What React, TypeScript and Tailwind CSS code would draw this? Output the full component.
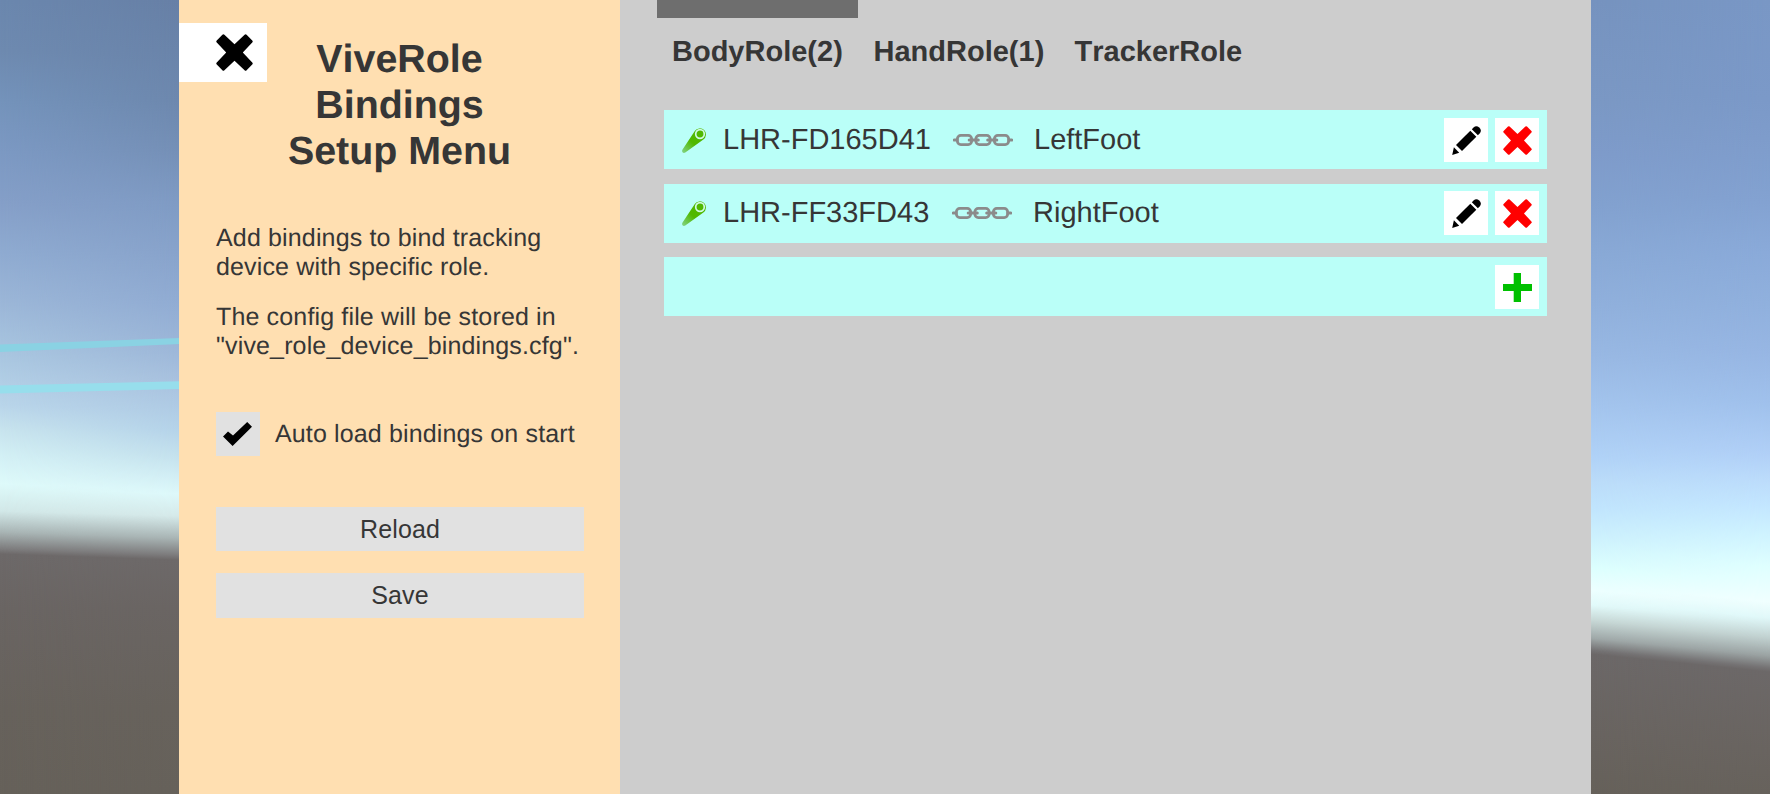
import type { ReactNode } from "react";

type Stop = [number, string];

const GROUND: Stop[] = [
  [608, "#6a6563"],
  [709, "#67625c"],
  [794, "#66615a"],
];

const WEST_OUTER: Stop[] = [
  [0, "#6b87ae"], [51, "#6e8ab0"], [101, "#7493bb"], [152, "#7c99c3"], [203, "#859fc8"],
  [253, "#8fabd1"], [304, "#9cb7d8"], [354, "#a9c6e0"], [405, "#b9d5ea"], [430, "#c8e4ee"],
  [456, "#d3f0f5"], [484, "#defafa"], [511, "#d2e8e8"], [532, "#a9b5b5"], [549, "#7d7c7d"],
  [554, "#6d6969"], ...GROUND,
];
const WEST_INNER: Stop[] = [
  [0, "#6780a6"], [101, "#6d88ae"], [152, "#7590b7"], [203, "#7f9bc4"], [253, "#88a3cb"],
  [304, "#91acd3"], [354, "#9eb8d9"], [380, "#a8c1de"], [430, "#b5d3e9"], [456, "#c4e1ed"],
  [494, "#ddf8fa"], [516, "#d5e9e9"], [538, "#a9b5b5"], [555, "#7d7c7d"], [560, "#6d6969"], ...GROUND,
];
const EAST_INNER: Stop[] = [
  [0, "#7693bf"], [101, "#7b98c4"], [152, "#7e9bca"], [203, "#82a1cf"], [253, "#89a9d6"],
  [304, "#90b0dc"], [354, "#98b8e3"], [405, "#a3c4ed"], [456, "#b0d2f7"], [481, "#bbdcf9"],
  [506, "#c0e4fd"], [537, "#cdf1fd"], [567, "#dcfffe"], [590, "#edffff"], [605, "#e2fafa"],
  [620, "#c8d9d7"], [638, "#a0a9a9"], [650, "#757374"], [654, "#6c6868"], [734, "#696460"], [794, "#66615a"],
];
const EAST_OUTER: Stop[] = [
  [0, "#7997c5"], [101, "#7b99c8"], [152, "#7f9dcc"], [203, "#83a2d1"], [253, "#8aaad9"],
  [304, "#90b0dd"], [354, "#97b6e3"], [405, "#a0c1ec"], [456, "#b1d0f7"], [481, "#bcdcfb"],
  [506, "#c3e6ff"], [537, "#d0f4ff"], [567, "#dfffff"], [602, "#f0ffff"], [618, "#e0f8f9"],
  [638, "#c0d0cf"], [656, "#9aa2a2"], [668, "#757374"], [672, "#6c6868"], [750, "#696460"], [794, "#67625c"],
];

function SkyGradient({ id, stops, x, tilt }: { id: string; stops: Stop[]; x: number; tilt: number }) {
  return (
    <linearGradient id={id} gradientUnits="userSpaceOnUse" x1={0} y1={0} x2={0} y2={794} gradientTransform={`translate(${x} 0) skewY(${tilt})`}>
      {stops.map(([y, color]) => (
        <stop key={y} offset={y / 794} stopColor={color} />
      ))}
    </linearGradient>
  );
}

function Skybox() {
  return (
    <svg className="absolute inset-0 -z-10" width={1770} height={794} viewBox="0 0 1770 794" aria-hidden="true">
      <defs>
        <SkyGradient id="westOuter" stops={WEST_OUTER} x={0} tilt={1.9} />
        <SkyGradient id="westInner" stops={WEST_INNER} x={179} tilt={1.9} />
        <SkyGradient id="eastInner" stops={EAST_INNER} x={1591} tilt={5.7} />
        <SkyGradient id="eastOuter" stops={EAST_OUTER} x={1770} tilt={5.7} />
        <linearGradient id="fadeWest" gradientUnits="userSpaceOnUse" x1={0} x2={179} y1={0} y2={0}>
          <stop offset={0} stopColor="#fff" stopOpacity={0} />
          <stop offset={1} stopColor="#fff" />
        </linearGradient>
        <linearGradient id="fadeEast" gradientUnits="userSpaceOnUse" x1={1591} x2={1770} y1={0} y2={0}>
          <stop offset={0} stopColor="#fff" stopOpacity={0} />
          <stop offset={1} stopColor="#fff" />
        </linearGradient>
        <mask id="maskWest" maskUnits="userSpaceOnUse" x={0} y={0} width={180} height={794}>
          <rect width={180} height={794} fill="url(#fadeWest)" />
        </mask>
        <mask id="maskEast" maskUnits="userSpaceOnUse" x={1590} y={0} width={180} height={794}>
          <rect x={1590} width={180} height={794} fill="url(#fadeEast)" />
        </mask>
      </defs>
      <rect width={180} height={794} fill="url(#westOuter)" />
      <rect width={180} height={794} fill="url(#westInner)" mask="url(#maskWest)" />
      <rect x={1590} width={180} height={794} fill="url(#eastInner)" />
      <rect x={1590} width={180} height={794} fill="url(#eastOuter)" mask="url(#maskEast)" />
      <path d="M0 344.5L180 338V344L0 352Z" fill="#8ad2e3" />
      <path d="M0 385.5L180 381.2V389L0 393.5Z" fill="#97deec" />
    </svg>
  );
}

function CrossIcon({ className }: { className: string }) {
  return (
    <svg className={className} viewBox="0 0 29 29" fill="currentColor" aria-hidden="true">
      <path d="M5 0.6Q5.8 -0.2 6.6 0.6L14.5 8L22.4 0.6Q23.2 -0.2 24 0.6L28.4 5Q29.2 5.8 28.4 6.6L21 14.5L28.4 22.4Q29.2 23.2 28.4 24L24 28.4Q23.2 29.2 22.4 28.4L14.5 21L6.6 28.4Q5.8 29.2 5 28.4L0.6 24Q-0.2 23.2 0.6 22.4L8 14.5L0.6 6.6Q-0.2 5.8 0.6 5Z" />
    </svg>
  );
}

function PencilIcon() {
  return (
    <svg className="size-[29px]" viewBox="0 0 29 29" fill="currentColor" aria-hidden="true">
      <path d="M19.8 3.2L21.6 1.4Q24.4 -1 27.2 1.6Q30.2 4.4 27.8 7.3L25.9 9.2Z" />
      <path d="M18.3 4.8L24.3 10.8L10 24.9L4 19Z" />
      <path d="M1.9 21.2L7.2 26.8L0.2 28.9Z" />
    </svg>
  );
}

function PlusIcon() {
  return (
    <svg className="size-[29px] text-[#00c000]" viewBox="0 0 29 29" fill="currentColor" aria-hidden="true">
      <path d="M10.7 0H18V10.9H29V18.1H18V29H10.7V18.1H0V10.9H10.7Z" />
    </svg>
  );
}

function CheckIcon() {
  return (
    <svg className="h-6 w-[29px]" viewBox="0 0 29 24" fill="currentColor" aria-hidden="true">
      <path d="M0 14.4L5 9.4L10 13.6L24.2 0L29 4.8L9.6 24Z" />
    </svg>
  );
}

function ControllerIcon() {
  return (
    <svg className="h-[25px] w-[25px]" viewBox="0 0 25 25" aria-hidden="true">
      <defs>
        <linearGradient id="handle" x1="0" y1="1" x2="0.4" y2="0.55">
          <stop offset="0" stopColor="#84d488" />
          <stop offset="1" stopColor="#50b800" />
        </linearGradient>
      </defs>
      <path d="M0.4 21.8L12.8 3A6.1 6.1 0 1 1 21.4 11.4L3.3 24.5Q1.6 25.4 0.5 24.2Q-0.3 23.2 0.4 21.8Z" fill="url(#handle)" />
      <circle cx="18" cy="6" r="4.3" fill="#50b800" stroke="#d0fbe4" strokeWidth="1.7" />
    </svg>
  );
}

function ChainIcon() {
  return (
    <svg className="h-3 w-[60px] shrink-0" viewBox="0 0 60 12" fill="none" stroke="#8b8b8b" strokeWidth="2.8" aria-hidden="true">
      <rect x="4.4" y="1.4" width="14.2" height="9.2" rx="3.4" />
      <rect x="22.9" y="1.4" width="14.2" height="9.2" rx="3.4" />
      <rect x="41.4" y="1.4" width="14.2" height="9.2" rx="3.4" />
      <path d="M1.3 6H4M16.2 6H25.3M34.7 6H43.8M56 6H58.7" strokeWidth="3" strokeLinecap="round" />
    </svg>
  );
}

function SquareButton({ label, className, children }: { label: string; className: string; children: ReactNode }) {
  return (
    <button type="button" aria-label={label} className={`flex size-11 shrink-0 items-center justify-center bg-white ${className}`}>
      {children}
    </button>
  );
}

const BINDINGS = [
  { device: "LHR-FD165D41", role: "LeftFoot", deviceWidth: "w-[230px]", gap: "mb-[15px]", pad: "pt-2" },
  { device: "LHR-FF33FD43", role: "RightFoot", deviceWidth: "w-[229px]", gap: "mb-[14px]", pad: "pt-[7px]" },
];

export default function App() {
  return (
    <div className="relative isolate flex h-[794px] w-[1770px] overflow-hidden pl-[179px] text-[#363636] [font-family:'Liberation_Sans',Arial,sans-serif] [font-kerning:none] [text-rendering:geometricPrecision]">
      <Skybox />

      <aside className="relative w-[441px] shrink-0 bg-[#ffdfb1] px-[37px]">
        <button type="button" aria-label="Close" className="absolute top-[23px] left-0 flex h-[59px] w-[88px] items-center bg-white pl-[37px] pb-px text-black">
          <CrossIcon className="size-[37px]" />
        </button>

        <h1 className="pt-[36px] text-center text-[39.4px] leading-[46px] font-bold">
          ViveRole
          <br />
          Bindings
          <br />
          Setup Menu
        </h1>

        <div className="mt-[50px] text-[25px] leading-[29px] tracking-[0.15px] whitespace-nowrap">
          <p>
            Add bindings to bind tracking
            <br />
            device with specific role.
          </p>
          <p className="mt-[21px]">
            The config file will be stored in
            <br />
            "vive_role_device_bindings.cfg".
          </p>
        </div>

        <label className="mt-[51px] flex h-11 items-center text-[25px] leading-[29px] tracking-[0.14px] whitespace-nowrap">
          <span className="mr-[15px] flex size-11 items-center justify-center bg-[#e1e1e1] pr-px pb-px text-black">
            <CheckIcon />
          </span>
          Auto load bindings on start
        </label>

        <div className="mt-[51px] flex flex-col gap-[22px] text-[25px] leading-[29px] tracking-[0.14px]">
          <button type="button" className="h-11 w-[368px] bg-[#e1e1e1]">Reload</button>
          <button type="button" className="h-[45px] w-[368px] bg-[#e1e1e1]">Save</button>
        </div>
      </aside>

      <main className="w-[971px] shrink-0 bg-[#cdcdcd] pl-[37px]">
        <nav className="flex h-[110px] text-[29px] leading-[33px] font-bold">
          <div className="w-[201px]">
            <div className="h-[18px] bg-[#6e6e6e]" />
            <div className="pt-[18px] pl-[15px]">BodyRole(2)</div>
          </div>
          <div className="w-[201px] pt-[36px] pl-[15.5px]">HandRole(1)</div>
          <div className="w-[201px] pt-[36px] pl-[15.5px]">TrackerRole</div>
        </nav>

        <div className="ml-[7px] w-[883px] text-[29px] leading-[33px]">
          {BINDINGS.map((b) => (
            <div key={b.device} className={`flex h-[59px] bg-[#bafff8] pl-[18px] ${b.gap} ${b.pad}`}>
              <div className="flex h-11 flex-1 items-center">
                <div className="mr-[16px] w-[25px] shrink-0">
                  <ControllerIcon />
                </div>
                <span className={`shrink-0 ${b.deviceWidth}`}>{b.device}</span>
                <ChainIcon />
                <span className="ml-[21px]">{b.role}</span>
              </div>
              <SquareButton label="Edit" className="mr-[7px] text-black">
                <PencilIcon />
              </SquareButton>
              <SquareButton label="Remove" className="mr-2 text-[#ff0000]">
                <CrossIcon className="size-[29px]" />
              </SquareButton>
            </div>
          ))}
          <div className="flex h-[59px] justify-end bg-[#bafff8] pt-2">
            <SquareButton label="Add" className="mr-2">
              <PlusIcon />
            </SquareButton>
          </div>
        </div>
      </main>
    </div>
  );
}
